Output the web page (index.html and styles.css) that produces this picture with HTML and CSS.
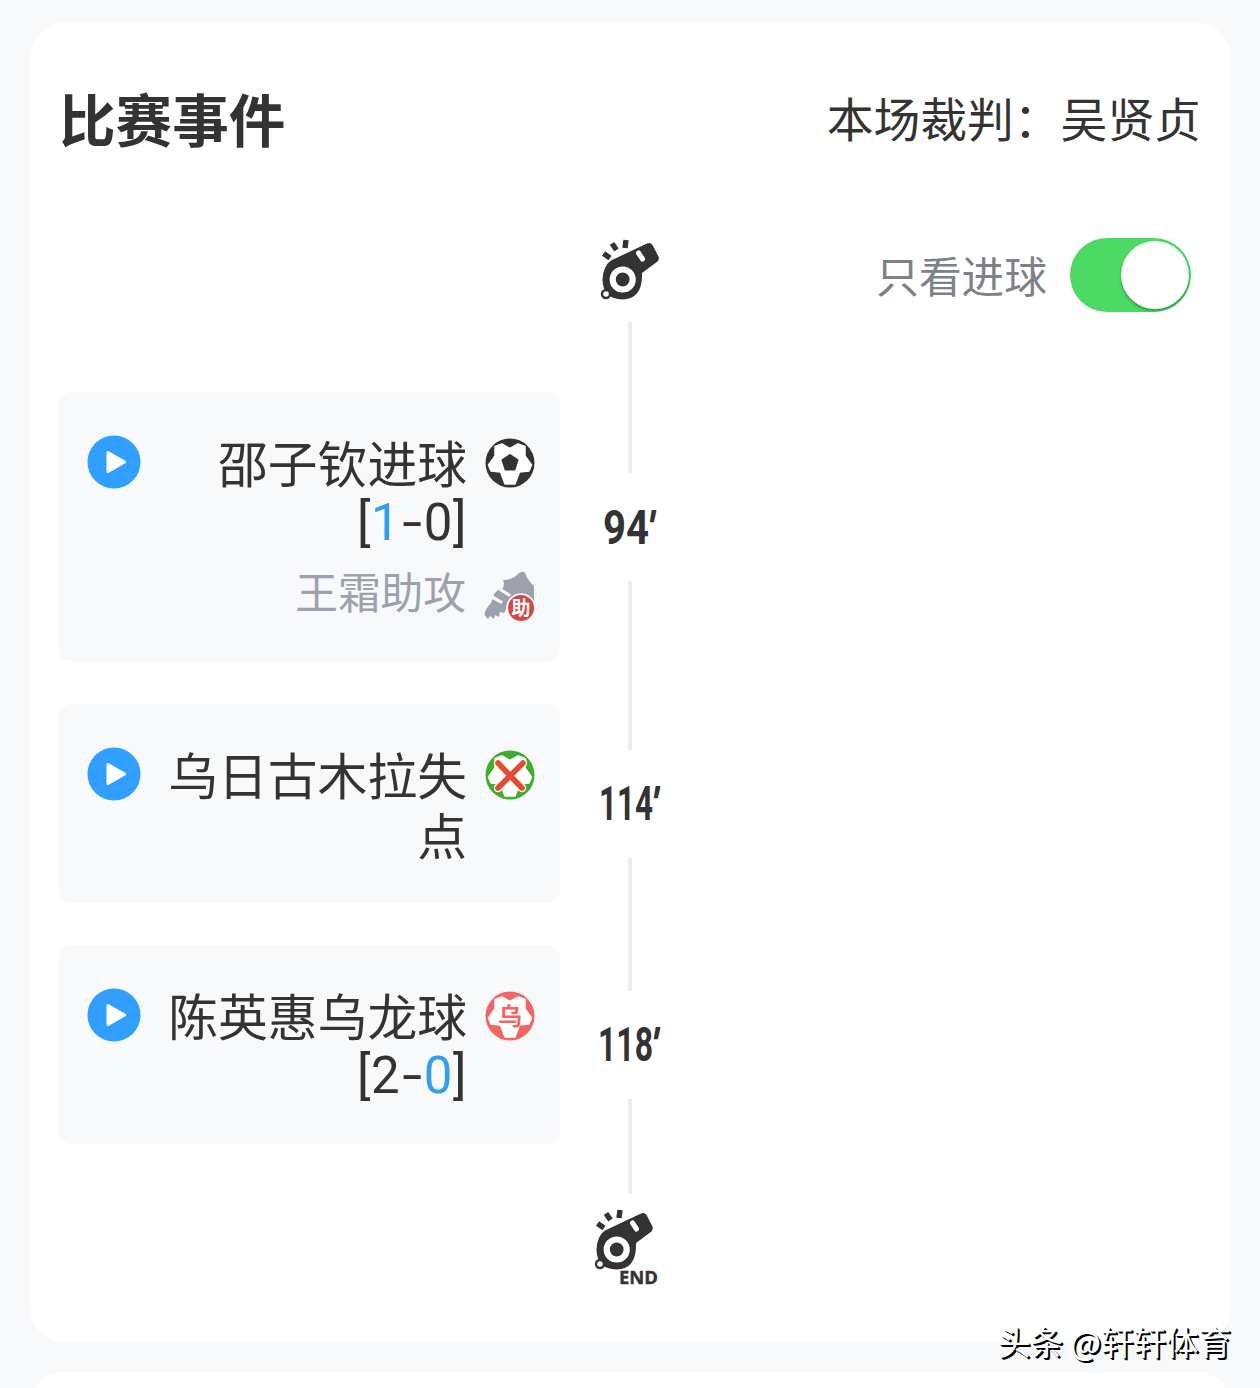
FILE: index.html
```html
<!DOCTYPE html>
<html lang="zh-CN">
<head>
<meta charset="utf-8">
<title>比赛事件</title>
<link rel="stylesheet" href="styles.css">
</head>
<body>
<svg class="defs" width="0" height="0" aria-hidden="true">
  <symbol id="whistle" viewBox="0 0 60 62">
    <path d="M11 22.500 47 5.500Q50.500 4 52.500 7L58.500 18.500Q59.500 21.500 57.500 23.500L42 35Q43 61 22.500 61.500Q3 61 2.500 42Q3 28 11 22.500Z" fill="#333"/>
    <path d="M38.500 15 42.500 21" stroke="#fff" stroke-width="5" stroke-linecap="round"/>
    <circle cx="22.700" cy="41.500" r="10" fill="#333" stroke="#fff" stroke-width="6.200"/>
    <circle cx="6" cy="56" r="4" fill="#fff" stroke="#333" stroke-width="2.400"/>
    <path d="M3.500 15.500 10 20M12 5.500 16.500 12M26 2 25 10" stroke="#333" stroke-width="5.400"/>
  </symbol>
  <symbol id="play" viewBox="0 0 54 54">
    <circle cx="27" cy="27" r="26.500" fill="#309fff"/>
    <path d="M21 17.500V36.500L37.500 27Z" fill="#fff" stroke="#fff" stroke-width="3" stroke-linejoin="round"/>
  </symbol>
  <symbol id="star" viewBox="0 0 50 50">
    <path d="M10 8.500 17 6 25 10.500 33 6 40 8.500 40 18 46.500 27 44 33 34.500 34 30 46H20L15.500 34 6 33 3.500 27 10 18Z" fill="#fff" stroke="#fff" stroke-width="1.500" stroke-linejoin="round"/>
  </symbol>
</svg>

<main class="panel">
  <header class="head">
    <h1 class="title">比赛事件</h1>
    <div class="referee">本场裁判：吴贤贞</div>
  </header>

  <div class="row start">
    <div class="axis"><svg class="whistle" width="60" height="62"><use href="#whistle"/></svg></div>
    <div class="filter"><span class="filter-label">只看进球</span><span class="switch"><i class="knob"></i></span></div>
  </div>
  <div class="row lead"><div class="axis"><i class="line"></i></div></div>

  <section class="row event">
    <article class="card">
      <svg class="play" width="54" height="54"><use href="#play"/></svg>
      <div class="details">
        <div class="entry">
          <div class="text">邵子钦进球<div class="score">[<b>1</b><span class="dash">-</span>0]</div></div>
          <svg class="icon" width="50" height="50" viewBox="0 0 50 50">
            <circle cx="25" cy="25" r="24.500" fill="#333"/>
            <use href="#star"/>
            <path d="M25 17 32.500 22 29.500 31.500H20.500L17.500 22Z" fill="#333" stroke="#333" stroke-width="2" stroke-linejoin="round"/>
          </svg>
        </div>
        <div class="entry assist">
          <div class="text">王霜助攻</div>
          <svg class="icon boot" width="52" height="52" viewBox="0 0 52 52">
            <path d="M19 9Q28 9 34 3Q38-1 41 2Q44 10 50 15V30L34 32Q24 33 20 42L16 41 15 46 11 44 10 48 6 45 4 48 0.500 44Q1 38 7 32L10 23 14 19 18.500 18Q21 13 19 9Z" fill="#9ca1ad"/>
            <path d="M8 26 17 31M17 19 25 24" stroke="#f8f9fb" stroke-width="3.200" stroke-linecap="round"/>
            <circle cx="37" cy="37" r="14.800" fill="#f8f9fb"/>
            <circle cx="37" cy="37" r="13" fill="#d94642"/>
            <text x="37" y="43.500" text-anchor="middle" class="badge-text">助</text>
          </svg>
        </div>
      </div>
    </article>
    <div class="axis"><i class="line"></i><svg class="time" width="80" height="108"><text y="71"><tspan x="13" textLength="46" lengthAdjust="spacingAndGlyphs">94</tspan><tspan class="prime" x="57">′</tspan></text></svg><i class="line"></i></div>
  </section>

  <section class="row event">
    <article class="card">
      <svg class="play" width="54" height="54"><use href="#play"/></svg>
      <div class="details">
        <div class="entry">
          <div class="text">乌日古木拉失<br>点</div>
          <svg class="icon" width="50" height="50" viewBox="0 0 50 50">
            <circle cx="25" cy="25" r="24.500" fill="#3fad2d"/>
            <use href="#star"/>
            <path d="M13 13 37 38M38 13 13 38" stroke="#fff6df" stroke-width="8.500" stroke-linecap="round"/>
            <path d="M13 13 37 38M38 13 13 38" stroke="#e34a3a" stroke-width="5.500" stroke-linecap="round"/>
          </svg>
        </div>
      </div>
    </article>
    <div class="axis"><i class="line"></i><svg class="time" width="80" height="108"><text y="70"><tspan x="9" textLength="54" lengthAdjust="spacingAndGlyphs">114</tspan><tspan class="prime" x="61">′</tspan></text></svg><i class="line"></i></div>
  </section>

  <section class="row event">
    <article class="card">
      <svg class="play" width="54" height="54"><use href="#play"/></svg>
      <div class="details">
        <div class="entry">
          <div class="text">陈英惠乌龙球<div class="score">[2<span class="dash">-</span><b>0</b>]</div></div>
          <svg class="icon" width="50" height="50" viewBox="0 0 50 50">
            <circle cx="25" cy="25" r="24.500" fill="#f36464"/>
            <use href="#star"/>
            <text x="25" y="34" text-anchor="middle" class="own-text">乌</text>
          </svg>
        </div>
      </div>
    </article>
    <div class="axis"><i class="line"></i><svg class="time" width="80" height="108"><text y="70"><tspan x="8" textLength="55" lengthAdjust="spacingAndGlyphs">118</tspan><tspan class="prime" x="61">′</tspan></text></svg><i class="line"></i></div>
  </section>

  <div class="row tail"><div class="axis"><i class="line"></i></div></div>
  <div class="row finish">
    <div class="axis">
      <svg class="end" width="66" height="80" viewBox="0 0 66 80">
        <use href="#whistle" width="60" height="62"/>
        <text x="25" y="76" textLength="39" lengthAdjust="spacingAndGlyphs">END</text>
      </svg>
    </div>
  </div>
</main>
<div class="panel next"></div>
<div class="watermark">头条 @轩轩体育</div>
</body>
</html>
```
FILE: styles.css
```css
* { box-sizing: border-box; }
body {
  margin: 0;
  height: 1388px;
  overflow: hidden;
  position: relative;
  padding: 22px 29px 0 30px;
  background: #f7f9fb;
  color: #333;
  font-family: "Noto Sans CJK SC", sans-serif;
}
.defs { display: block; height: 0; }
.panel {
  height: 1321px;
  padding: 59px 28px 0;
  background: #fff;
  border-radius: 36px;
}
.next {
  height: 15px;
  margin: 30px 7px 0;
  padding: 0;
  border-radius: 26px 26px 0 0 / 15px 15px 0 0;
}
.head {
  display: flex;
  justify-content: space-between;
  align-items: center;
  height: 72px;
  padding: 0 2px 0 1px;
}
.title { margin: 0; font-size: 56.6px; line-height: 72px; font-weight: 700; }
.referee { font-size: 46.8px; line-height: 72px; }
.row {
  display: grid;
  grid-template-columns: 502px 140px 1fr;
}
.axis {
  grid-column: 2;
  display: flex;
  flex-direction: column;
  align-items: center;
}
.line { width: 4px; flex: 1; background: #eee; }
.start { height: 169px; padding-top: 85px; }
.whistle { display: block; }
.filter {
  display: flex;
  justify-content: flex-end;
  align-items: center;
  gap: 23px;
  height: 74px;
  padding-right: 12px;
  color: #7d8189;
  font-size: 42.7px;
  line-height: 72px;
}
.filter-label { height: 74px; }
.switch {
  display: flex;
  justify-content: flex-end;
  width: 121px;
  height: 74px;
  padding: 3px 2px;
  border-radius: 37px;
  background: #4cd964;
}
.knob {
  width: 68px;
  height: 68px;
  border-radius: 50%;
  background: #fff;
  box-shadow: 0 2px 3px rgba(0, 0, 0, .3);
}
.lead { height: 49px; }
.tail { height: 29px; }
.card {
  display: flex;
  justify-content: space-between;
  margin: 21px 0;
  padding: 39px 25px 40px 29px;
  border-radius: 14px;
  background: #f8f9fb;
}
.play { flex: none; margin-top: 4px; }
.details { flex: none; }
.entry {
  display: flex;
  justify-content: flex-end;
  gap: 18px;
}
.text { text-align: right; font-size: 49.8px; line-height: 60px; }
.text b { font-weight: 400; color: #309fee; }
.score {
  height: 60px;
  font-family: Roboto, sans-serif;
  font-size: 51px;
  line-height: 64px;
  letter-spacing: .5px;
}
.dash { display: inline-block; padding: 0 4px 0 5px; transform: scaleX(1.4); }
.icon { flex: none; margin-top: 7px; }
.assist { gap: 17px; height: 59px; margin-top: 12px; }
.assist .text { color: #9ca1ad; font-size: 42.7px; line-height: 54px; }
.assist .boot { margin: 8px -1px 0 1px; }
.badge-text { fill: #fff; font-size: 19px; font-weight: 700; }
.own-text { fill: #f36464; font-size: 24px; font-weight: 700; }
.time {
  flex: none;
  overflow: visible;
  fill: #333;
  font-family: Roboto, sans-serif;
  font-size: 49px;
  font-weight: 700;
}
.prime { font-style: italic; font-size: 46px; }
.finish { padding-top: 14px; }
.end {
  margin-right: 6px;
  fill: #333;
  font-family: "Open Sans", sans-serif;
  font-size: 18px;
  font-weight: 700;
}
.end text { stroke: #333; stroke-width: .4px; }
.watermark {
  position: absolute;
  right: 29px;
  top: 1317px;
  color: #fff;
  font-size: 32.5px;
  line-height: 48px;
  white-space: pre;
  text-shadow: 1px 1px 0 #000, 2px 2px 0 #000;
}
```
